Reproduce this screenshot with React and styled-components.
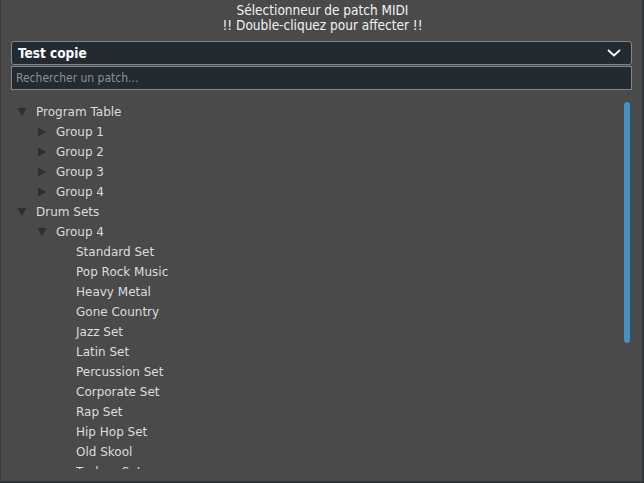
import React from 'react'
import styled, {createGlobalStyle} from 'styled-components'

const Global = createGlobalStyle`
  html, body {
    margin: 0;
    padding: 0;
    background: #4a4a4a;
  }
`

const Window = styled('div')`
  width: 644px;
  height: 483px;
  box-sizing: border-box;
  background: #4a4a4a;
  border-left: 1px solid #3a3a3a;
  border-right: 2px solid #2f3336;
  border-bottom: 2px solid #2f3336;
  display: flex;
  flex-direction: column;
  overflow: hidden;
  font-family: "DejaVu Sans Condensed", "Liberation Sans Narrow", "DejaVu Sans", sans-serif;
  font-stretch: condensed;
`

const Title = styled('div')`
  text-align: center;
  color: #f2f2f2;
  font-size: 13.5px;
  line-height: 15px;
  padding-top: 3px;
  padding-left: 2px;
`

const Controls = styled('div')`
  display: flex;
  flex-direction: column;
  gap: 1px;
  margin: 8px 10px 0 10px;
`

const Select = styled('div')`
  height: 22px;
  display: flex;
  align-items: center;
  justify-content: space-between;
  padding: 0 10px 0 6px;
  background: #232a31;
  border: 1px solid #80868a;
  border-radius: 3px;
  color: #ffffff;
  font-size: 13.5px;
  font-weight: bold;
`

const Search = styled('div')`
  height: 22px;
  display: flex;
  align-items: center;
  padding: 0 4px;
  background: #232a31;
  border: 1px solid #80868a;
  color: #8b9095;
  font-size: 12px;
`

const TreeArea = styled('div')`
  flex: 1;
  position: relative;
  overflow: hidden;
  margin-top: 12px;
  margin-bottom: 12px;
`

const Row = styled('div')`
  height: 20px;
  display: flex;
  align-items: center;
  padding-left: ${p => 16 + p.$level * 20}px;
  color: #dcdcdc;
  font-family: "DejaVu Sans", sans-serif;
  font-stretch: normal;
  font-size: 12px;
  white-space: nowrap;
`

const Arrow = styled('span')`
  width: 19px;
  flex: none;
  display: flex;
  align-items: center;
`

const Scrollbar = styled('div')`
  position: absolute;
  right: 12px;
  top: 0;
  width: 6px;
  height: 241px;
  border-radius: 3px;
  background: #4293c2;
`

function Triangle ({open}) {
  return (
    <svg width="10" height="10" viewBox="0 0 10 10">
      {open
        ? <polygon points="0.5,1 9.5,1 5,9" fill="#2f2f2f" />
        : <polygon points="1,0.5 9,5 1,9.5" fill="#2f2f2f" />}
    </svg>
  )
}

const tree = [
  {label: 'Program Table', level: 0, arrow: 'open'},
  {label: 'Group 1', level: 1, arrow: 'closed'},
  {label: 'Group 2', level: 1, arrow: 'closed'},
  {label: 'Group 3', level: 1, arrow: 'closed'},
  {label: 'Group 4', level: 1, arrow: 'closed'},
  {label: 'Drum Sets', level: 0, arrow: 'open'},
  {label: 'Group 4', level: 1, arrow: 'open'},
  {label: 'Standard Set', level: 2},
  {label: 'Pop Rock Music', level: 2},
  {label: 'Heavy Metal', level: 2},
  {label: 'Gone Country', level: 2},
  {label: 'Jazz Set', level: 2},
  {label: 'Latin Set', level: 2},
  {label: 'Percussion Set', level: 2},
  {label: 'Corporate Set', level: 2},
  {label: 'Rap Set', level: 2},
  {label: 'Hip Hop Set', level: 2},
  {label: 'Old Skool', level: 2},
  {label: 'Techno Set', level: 2}
]

export default function App () {
  return (
    <Window>
      <Global />
      <Title>
        Sélectionneur de patch MIDI<br />
        !! Double-cliquez pour affecter !!
      </Title>
      <Controls>
        <Select>
          <span>Test copie</span>
          <svg width="14" height="8" viewBox="0 0 14 8">
            <polyline points="1,1 7,6.5 13,1" fill="none" stroke="#ffffff" strokeWidth="1.8" />
          </svg>
        </Select>
        <Search>Rechercher un patch...</Search>
      </Controls>
      <TreeArea>
        {tree.map((item, i) => (
          <Row key={i} $level={item.level}>
            <Arrow>{item.arrow && <Triangle open={item.arrow === 'open'} />}</Arrow>
            {item.label}
          </Row>
        ))}
        <Scrollbar />
      </TreeArea>
    </Window>
  )
}
